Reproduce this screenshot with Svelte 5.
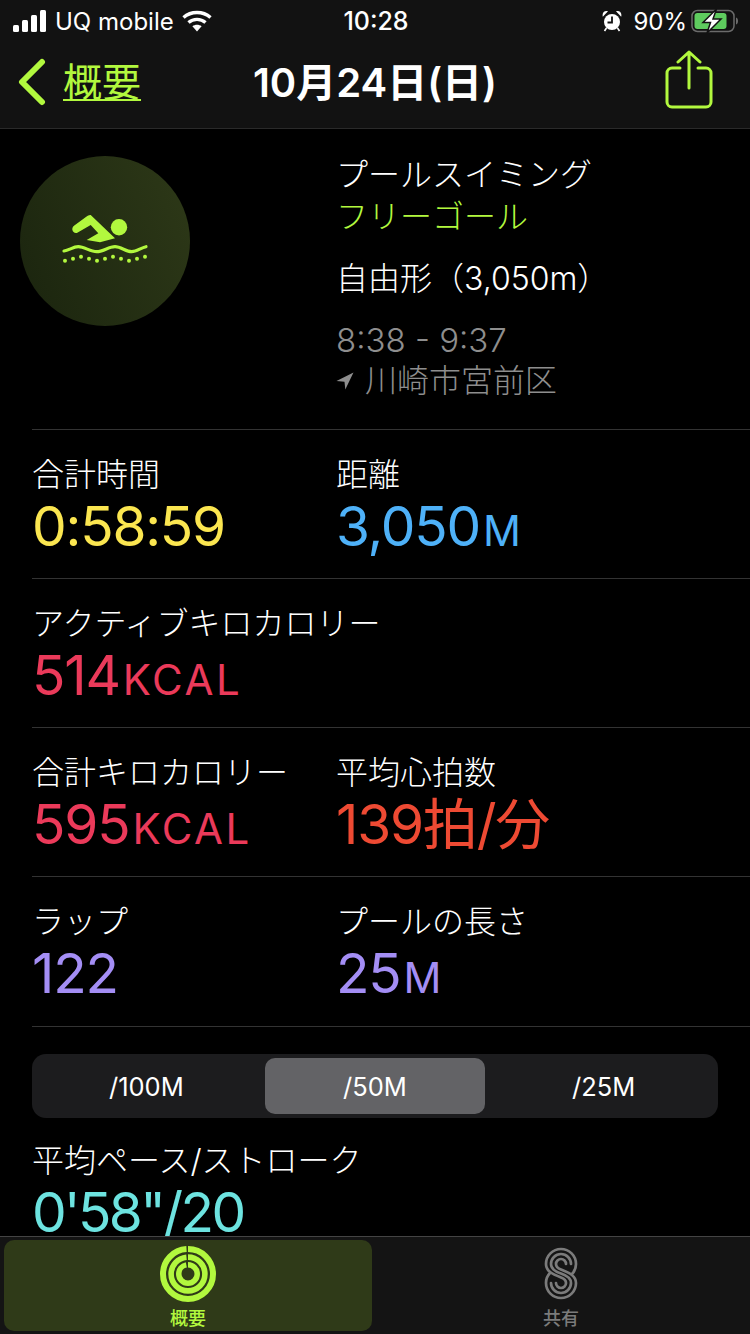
<script>
	const dots = [
		[45, 104.7], [53, 102.7], [61, 100.7], [69, 102.7], [77, 104.7], [85, 102.7],
		[93, 100.7], [101, 102.7], [109, 104.7], [117, 102.7], [125, 100.7]
	];

	const rows = [
		[
			{ label: '合計時間', value: '0:58:59', unit: '', color: 'yellow' },
			{ label: '距離', value: '3,050', unit: 'M', color: 'blue' }
		],
		[{ label: 'アクティブキロカロリー', value: '514', unit: 'KCAL', color: 'red' }],
		[
			{ label: '合計キロカロリー', value: '595', unit: 'KCAL', color: 'red' },
			{ label: '平均心拍数', value: '139拍/分', unit: '', color: 'orange' }
		],
		[
			{ label: 'ラップ', value: '122', unit: '', color: 'purple' },
			{ label: 'プールの長さ', value: '25', unit: 'M', color: 'purple' }
		]
	];

	const segments = ['/100M', '/50M', '/25M'];
	let selected = 1;
</script>

<div class="page">
	<header class="top">
		<div class="status">
			<div class="status-left">
				<svg class="signal" width="34" height="22" viewBox="0 0 34 22">
					<rect x="0" y="15" width="6" height="7" rx="1.5" />
					<rect x="9" y="10" width="6" height="12" rx="1.5" />
					<rect x="18" y="5" width="6" height="17" rx="1.5" />
					<rect x="27" y="0" width="6" height="22" rx="1.5" />
				</svg>
				<span>UQ mobile</span>
				<svg class="wifi" width="30" height="22" viewBox="0 0 30 22" fill="none" stroke="#fff" stroke-width="3.4">
					<path d="M1.5 7.5C9 .8 21 .8 28.5 7.5" />
					<path d="M6.5 12.5c4.800-4.200 12.200-4.200 17 0" />
					<path d="M15 21.500l-4.600-5.200c2.600-2 6.600-2 9.200 0z" fill="#fff" stroke="none" />
				</svg>
			</div>
			<div class="status-time">10:28</div>
			<div class="status-right">
				<svg class="alarm" width="20" height="22" viewBox="0 0 20 22">
					<circle cx="10" cy="12" r="8" fill="#fff" />
					<path d="M10 6.500V12.500H5.500" fill="none" stroke="#121212" stroke-width="1.800" />
					<path d="M.8 6.800C-.2 2.500 2.500.2 6 1.200zM19.200 6.800C20.200 2.500 17.500.2 14 1.200z" fill="#fff" />
					<path d="M4.500 18l-2 3M15.500 18l2 3" stroke="#fff" stroke-width="1.600" />
				</svg>
				<span class="percent">90%</span>
				<svg class="battery" width="48" height="24" viewBox="0 0 48 24">
					<rect x="1" y="1.500" width="42" height="21" rx="5.500" fill="none" stroke="#6b6b6b" stroke-width="1.500" />
					<rect x="3.500" y="4" width="32" height="16" rx="3" fill="#5ecb5e" />
					<path d="M45 8.500c1.500.5 2 1.800 2 3.500s-.5 3-2 3.500z" fill="#6b6b6b" />
					<path d="M25.500 0L12 13.500h7.500L16 24l14-14h-8z" fill="#fff" stroke="#121212" stroke-width="1.500" />
				</svg>
			</div>
		</div>
		<nav class="nav">
			<div class="back">
				<svg width="30" height="48" viewBox="0 0 30 48" fill="none" stroke="#b2f83e" stroke-width="6" stroke-linecap="round" stroke-linejoin="round">
					<path d="M25 4L5 24l20 20" />
				</svg>
				<span class="back-label">概要</span>
			</div>
			<div class="title">10月24日(日)</div>
			<div class="share">
				<svg width="48" height="60" viewBox="0 0 48 60" fill="none" stroke="#b2f83e" stroke-width="3" stroke-linecap="round" stroke-linejoin="round">
					<path d="M15 18H7a5 5 0 0 0-5 5v29a5 5 0 0 0 5 5h34a5 5 0 0 0 5-5V23a5 5 0 0 0-5-5h-8" />
					<path d="M24 38V2M13 12L24 2l11 10" />
				</svg>
			</div>
		</nav>
	</header>

	<main class="content">
		<section class="workout">
			<div class="badge">
				<svg width="170" height="170" viewBox="0 0 170 170">
					<defs>
						<linearGradient id="disc" x1="0" y1="0.700" x2="1" y2="0.300">
							<stop offset="0" stop-color="#1c260f" />
							<stop offset="1" stop-color="#2c3717" />
						</linearGradient>
					</defs>
					<circle cx="85" cy="85" r="85" fill="url(#disc)" />
					<circle cx="99" cy="71.300" r="8.200" fill="#b2f83e" />
					<path d="M70.700 59l24.300 23.300-15 4-13.300-2.300 11.600-6.700L70.700 69l-13.400 7.700c-4.500 1.500-7-4.500-3-7.200l13-9.500c1.300-.9 2.700-1 3.400-1z" fill="#b2f83e" />
					<path d="M44 95c5-.5 9-4.300 14.300-4.300 6 0 12 5 18.400 5 6.300 0 12-5 18.300-5 6 0 11 5 16.700 5 5 0 9-3.800 14.300-5" fill="none" stroke="#b2f83e" stroke-width="3.200" stroke-linecap="round" />
					{#each dots as [x, y]}
						<circle cx={x} cy={y} r="2" fill="#b2f83e" />
					{/each}
				</svg>
			</div>
			<div class="info">
				<div>プールスイミング</div>
				<div class="goal">フリーゴール</div>
				<div class="stroke">自由形（3,050m）</div>
				<div class="time">8:38 - 9:37</div>
				<div class="place">
					<svg width="18" height="18" viewBox="0 0 18 18"><path d="M17.500 .5L.5 9l8 .8.800 7.700z" fill="#8e8e8e" /></svg>
					<span>川崎市宮前区</span>
				</div>
			</div>
		</section>

		{#each rows as row}
			<section class="row">
				{#each row as stat}
					<div class="stat">
						<div class="label">{stat.label}</div>
						<div class="value {stat.color}">{stat.value}<span class="unit">{stat.unit}</span></div>
					</div>
				{/each}
			</section>
		{/each}

		<section class="pace">
			<div class="segments">
				{#each segments as seg, i}
					<div class="segment" class:on={i === selected}>{seg}</div>
				{/each}
			</div>
			<div class="label">平均ペース/ストローク</div>
			<div class="value cyan">0'58"/20</div>
		</section>
	</main>

	<footer class="tabs">
		<div class="tab active">
			<svg width="58" height="58" viewBox="0 0 58 58" fill="none" stroke="#b2f83e">
				<g transform="rotate(-90 29 29)">
					<circle cx="29" cy="29" r="25" stroke-width="6" pathLength="100" stroke-dasharray="99 1" />
					<circle cx="29" cy="29" r="16.900" stroke-width="5.600" pathLength="100" stroke-dasharray="98.500 1.500" />
					<circle cx="29" cy="29" r="9.250" stroke-width="5.500" pathLength="100" stroke-dasharray="97 3" />
				</g>
			</svg>
			<span>概要</span>
		</div>
		<div class="tab">
			<svg width="36" height="54" viewBox="0 0 36 54" fill="none" stroke="#7b7b7b" stroke-width="2.700" stroke-linecap="round">
				<path d="M29 27C32 24 33 21 33 17A15 15 0 0 0 3 17C3 24 9 27 18 30.500C21 31.600 23 33.500 23 36A5 5 0 1 1 13 36" />
				<path d="M28 17A10 10 0 0 0 8 17C8 21.500 12 24.500 18 26.500C24 28.500 28 31.500 28 36A10 10 0 0 1 8 36" />
				<path d="M7 26C4 29 3 32 3 36A15 15 0 0 0 33 36C33 29 27 26 18 22.500C15 21.400 13 19.500 13 17A5 5 0 1 1 23 17" />
			</svg>
			<span>共有</span>
		</div>
	</footer>
</div>

<style>
	:global(body) {
		background: #000;
	}

	.page {
		width: 750px;
		height: 1334px;
		display: flex;
		flex-direction: column;
		overflow: hidden;
		background: #000;
		color: #fff;
		font-family: 'Inter', 'Noto Sans CJK JP', sans-serif;
	}

	.top {
		height: 129px;
		flex: none;
		box-sizing: border-box;
		background: #121212;
		border-bottom: 1px solid #2a2a2a;
	}

	.status {
		height: 42px;
		display: grid;
		grid-template-columns: 1fr auto 1fr;
		align-items: center;
		padding: 0 11px 0 13px;
		font-size: 24px;
	}

	.status-left,
	.status-right {
		display: flex;
		align-items: center;
		gap: 8px;
	}

	.status-right {
		justify-content: flex-end;
		gap: 11px;
	}

	.percent {
		margin-right: -7px;
	}

	.status-time {
		font-size: 25px;
		font-weight: 500;
	}

	.signal {
		fill: #fff;
	}

	.nav {
		height: 80px;
		display: grid;
		grid-template-columns: 1fr auto 1fr;
		align-items: center;
		padding: 0 17px;
	}

	.back {
		display: flex;
		align-items: center;
		gap: 16px;
	}

	.back-label {
		color: #b2f83e;
		font-size: 39px;
		line-height: 50px;
		text-decoration: underline;
		text-decoration-thickness: 2px;
		text-underline-offset: 3px;
	}

	.title {
		margin-bottom: 5px;
		font-size: 40px;
		font-weight: 600;
	}

	.share {
		display: flex;
		justify-content: flex-end;
		margin: 0 20px 5px 0;
	}

	.content {
		flex: 1;
		min-height: 0;
		overflow: hidden;
		padding-left: 32px;
	}

	.workout {
		height: 300px;
		display: grid;
		grid-template-columns: 304px 1fr;
		font-size: 32px;
		font-weight: 300;
		line-height: 42px;
	}

	.badge {
		margin: 27px 0 0 -12px;
	}

	.info {
		padding-top: 25px;
	}

	.goal {
		color: #b2f83e;
	}

	.stroke {
		margin-top: 20px;
	}

	.time {
		margin-top: 19px;
		color: #8e8e8e;
		font-size: 33px;
	}

	.place {
		display: flex;
		align-items: center;
		gap: 11px;
		margin-top: -1px;
		color: #8e8e8e;
	}

	.row {
		height: 149px;
		box-sizing: border-box;
		border-top: 1px solid #333;
		display: grid;
		grid-template-columns: 304px 1fr;
		padding-top: 23px;
	}

	.label {
		font-size: 32px;
		font-weight: 300;
		line-height: 43px;
		white-space: nowrap;
	}

	.value {
		font-size: 55px;
		font-weight: 400;
		line-height: 60px;
		letter-spacing: -1.2px;
		white-space: nowrap;
	}

	.unit {
		margin-left: 3px;
		font-size: 42px;
		font-weight: 400;
		letter-spacing: 2.500px;
	}

	.yellow { color: #fbe650; }
	.blue { color: #4eb1f8; }
	.red { color: #eb3a5a; }
	.orange { color: #ee4a33; }
	.purple { color: #a48ef5; }

	.cyan {
		margin-top: 6px;
		color: #6de3e0;
		line-height: 48px;
		letter-spacing: -2.600px;
	}

	.pace {
		margin-top: 1px;
		border-top: 1px solid #333;
		padding-top: 27px;
	}

	.segments {
		width: 686px;
		height: 64px;
		box-sizing: border-box;
		margin-bottom: 21px;
		padding: 4px;
		display: grid;
		grid-template-columns: repeat(3, 1fr);
		gap: 8px;
		border-radius: 14px;
		background: #1c1c1e;
	}

	.segment {
		display: flex;
		align-items: center;
		justify-content: center;
		border-radius: 10px;
		font-size: 25.500px;
	}

	.segment.on {
		background: #636366;
	}

	.tabs {
		height: 98px;
		flex: none;
		box-sizing: border-box;
		display: grid;
		grid-template-columns: 368px 1fr;
		padding: 3px 0 4px 4px;
		background: #141414;
		border-top: 1px solid #444;
	}

	.tab {
		display: flex;
		flex-direction: column;
		align-items: center;
		color: #7b7b7b;
		font-size: 18px;
		font-weight: 500;
		line-height: 24px;
	}

	.tab svg {
		flex: none;
		margin-top: 5px;
	}

	.tab span {
		margin-top: 4px;
	}

	.tab:not(.active) svg {
		margin-top: 7px;
		margin-bottom: 2px;
	}

	.tab.active {
		border-radius: 10px;
		background: #2f3a18;
		color: #b2f83e;
	}
</style>
